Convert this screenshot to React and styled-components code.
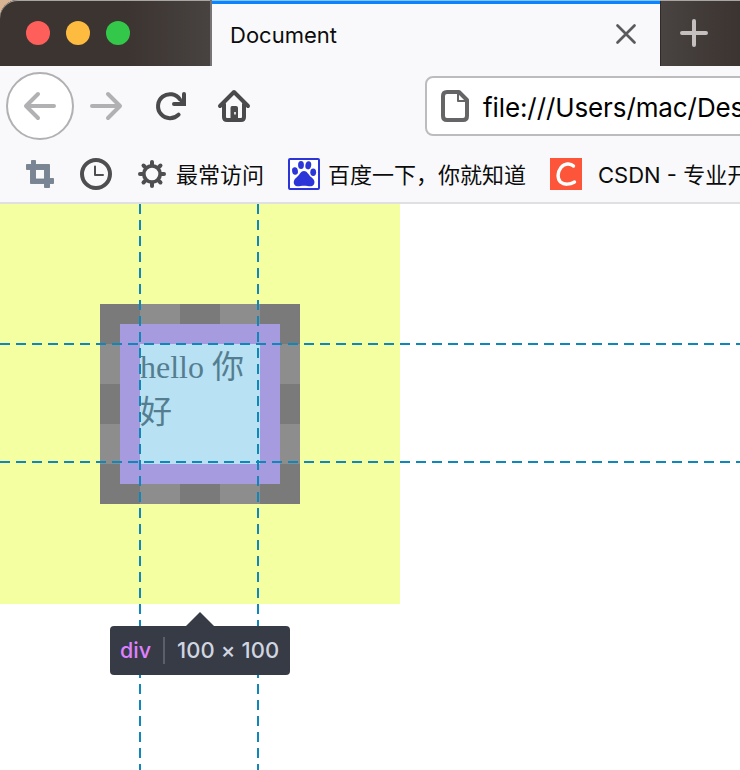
import React from "react";
import styled, { createGlobalStyle } from "styled-components";

const GlobalStyle = createGlobalStyle`
  * { box-sizing: border-box; }
  html, body { margin: 0; padding: 0; overflow: hidden; background: #fff; }
  svg { display: block; flex: none; overflow: visible; }
`;

const Window = styled.div`
  width: 740px;
  height: 770px;
  display: flex;
  flex-direction: column;
  overflow: hidden;
  background: #d8b493;
  font-family: Inter, "Noto Sans CJK SC", sans-serif;
  color: #0c0c0d;
  white-space: nowrap;
`;

const TabStrip = styled.header`
  height: 66px;
  flex: none;
  display: flex;
  border-top-left-radius: 18px;
  background: #3b3431;
  box-shadow: inset 0 1px 0 #a8a5a3;
`;

const WindowControls = styled.div`
  width: 210px;
  display: flex;
  gap: 16px;
  padding: 21px 0 0 26px;
  border-top-left-radius: 18px;
  background: linear-gradient(90deg, #3b3431 60%, #484240);
  box-shadow: inset 0 1px 0 #a8a5a3;
`;

const ControlDot = styled.span`
  width: 24px;
  height: 24px;
  border-radius: 50%;
  background: ${(p) => p.$color};
`;

const Tab = styled.div`
  width: 450px;
  display: flex;
  align-items: center;
  justify-content: space-between;
  padding: 4px 24px 0 18px;
  border-left: 2px solid #777476;
  background: linear-gradient(#8dc4fb 0 1px, #0a84ff 1px 4px, #f9f9fb 4px);
`;

const TabTitle = styled.span`
  font-size: 22px;
  line-height: 30px;
`;

const NewTab = styled.div`
  width: 80px;
  padding: 19px 0 0 20px;
  background: linear-gradient(90deg, #494341, #3b3431);
  box-shadow: inset 0 1px 0 #a8a5a3, inset 1px 0 0 #302b29;
`;

const NavBar = styled.nav`
  height: 80px;
  flex: none;
  display: flex;
  align-items: center;
  padding-left: 6px;
  background: #f9f9fb;
`;

const BackButton = styled.div`
  width: 68px;
  height: 68px;
  flex: none;
  display: grid;
  place-items: center;
  border: 2px solid #b1b1b3;
  border-radius: 50%;
  background: #fff;
`;

const NavIcon = styled.div`
  width: 32px;
  flex: none;
  margin-left: ${(p) => p.$gap}px;
`;

const UrlField = styled.div`
  width: 360px;
  height: 60px;
  flex: none;
  display: flex;
  align-items: center;
  margin-left: 175px;
  padding-left: 14px;
  gap: 14px;
  border: 2px solid #bcbcbe;
  border-radius: 8px;
  background: #fff;
`;

const UrlText = styled.span`
  font-size: 26px;
  letter-spacing: -0.1px;
  padding-top: 2px;
  color: #000;
`;

const BookmarksBar = styled.div`
  height: 58px;
  flex: none;
  display: flex;
  align-items: center;
  padding: 0 0 0 24px;
  border-bottom: 2px solid #e0e0e2;
  background: #f9f9fb;
`;

const Bookmark = styled.div`
  display: flex;
  align-items: center;
  flex: none;
  gap: ${(p) => p.$gap || 8}px;
  margin-left: ${(p) => p.$offset || 0}px;
`;

const BookmarkLabel = styled.span`
  font-size: 22px;
  line-height: 30px;
  padding-top: 2px;
`;

const Page = styled.main`
  position: relative;
  flex: 1;
  background: #fff;
`;

const MarginBox = styled.div`
  width: 400px;
  height: 400px;
  padding: 100px;
  background: #f3ffa0;
`;

const BorderBox = styled.div`
  width: 200px;
  height: 200px;
  padding: 20px;
  background:
    repeating-linear-gradient(90deg, #7a7a7a 0 40px, #8d8d8d 40px 80px) top / 100% 20px no-repeat,
    repeating-linear-gradient(90deg, #7a7a7a 0 40px, #8d8d8d 40px 80px) bottom / 100% 20px no-repeat,
    repeating-linear-gradient(#7a7a7a 0 40px, #8d8d8d 40px 80px);
`;

const PaddingBox = styled.div`
  width: 160px;
  height: 160px;
  padding: 20px;
  background: #a79be0;
`;

const ContentBox = styled.div`
  width: 120px;
  height: 120px;
  overflow: hidden;
  background: #b8e1f3;
  color: #547e90;
  font: 32px/45px "Liberation Serif", "Noto Sans CJK SC", serif;
  padding-top: 1px;
  white-space: normal;
`;

const VerticalGuide = styled.i`
  position: absolute;
  top: 0;
  bottom: 0;
  left: ${(p) => p.$at}px;
  width: 2px;
  background: repeating-linear-gradient(#0f87b8 0 10px, transparent 10px 16px);
`;

const HorizontalGuide = styled.i`
  position: absolute;
  left: 0;
  right: 0;
  top: ${(p) => p.$at}px;
  height: 2px;
  background: repeating-linear-gradient(90deg, #0f87b8 0 10px, transparent 10px 16px);
`;

const InfoTip = styled.div`
  position: absolute;
  left: 110px;
  top: 408px;
  width: 180px;
  display: flex;
  flex-direction: column;
  align-items: center;
`;

const InfoBody = styled.div`
  width: 180px;
  height: 49px;
  display: flex;
  align-items: center;
  padding-left: 10px;
  border-radius: 4px;
  background: #363b45;
  font-size: 22px;
  font-weight: 500;
  line-height: 27px;
`;

const TagName = styled.span`
  width: 34px;
  font-size: 21.5px;
  color: #df80ff;
`;

const Dimensions = styled.span`
  margin-left: 9px;
  padding-left: 12px;
  border-left: 2px solid #5a606b;
  letter-spacing: 0.1px;
  color: #d0d5e0;
`;

const Arrow = ({ flip }) => (
  <svg width="32" height="32" viewBox="0 0 32 32" fill="none" stroke="#b1b1b3" strokeWidth="4" strokeLinecap="round" strokeLinejoin="round">
    <path d={flip ? "M2 16H29M18 4L30 16L18 28" : "M30 16H3M14 4L2 16L14 28"} />
  </svg>
);

const ReloadIcon = () => (
  <svg width="32" height="32" viewBox="0 0 32 32" fill="none" stroke="#4a4a4c" strokeWidth="4" strokeLinecap="round">
    <path d="M24.6 24.6A12 12 0 1 1 26 9.5" />
    <path d="M30 4V14H20" strokeLinejoin="miter" />
    <path d="M24 14L30 8V14Z" fill="#4a4a4c" strokeWidth="1" />
  </svg>
);

const HomeIcon = () => (
  <svg width="32" height="32" viewBox="0 0 32 32" fill="none" stroke="#4a4a4c" strokeWidth="4" strokeLinecap="round" strokeLinejoin="round">
    <path d="M2 16L16 2L30 16M6 14V27Q6 30 9 30H23Q26 30 26 27V14" />
    <path d="M12.5 30V18Q12.5 16 14 16H18Q20 16 20 18V30Z" fill="#4a4a4c" stroke="none" />
    <rect x="16" y="22" width="2" height="2.5" fill="#d9d9db" stroke="none" />
  </svg>
);

const CloseIcon = () => (
  <svg width="20" height="20" viewBox="0 0 20 20" stroke="#5a5a5c" strokeWidth="2.7" strokeLinecap="round">
    <path d="M1.5 0.5L18.5 17.5M18.5 0.5L1.5 17.5" />
  </svg>
);

const PlusIcon = () => (
  <svg width="28" height="28" viewBox="0 0 28 28" stroke="#c3c0bf" strokeWidth="4" strokeLinecap="round">
    <path d="M14 2V26M2 14H26" />
  </svg>
);

const FileIcon = () => (
  <svg width="28" height="32" viewBox="0 0 28 32" fill="none" stroke="#656567" strokeWidth="4" strokeLinejoin="round">
    <path d="M6 2H18L26 10V26Q26 30 22 30H6Q2 30 2 26V6Q2 2 6 2Z" />
    <path d="M17 3V11H25" strokeWidth="2" />
  </svg>
);

const CropIcon = () => (
  <svg width="32" height="32" viewBox="0 0 32 32">
    <path fillRule="evenodd" d="M7.5 2.5H11.5V6.5H25.5V20.5H29.5V25.5H25.5V29.5H20.5V25.5H6.5V11.5H2.5V6.5H7.5ZM11.5 11.5V21H20.5V11.5Z" fill="#798594" stroke="#6c7886" strokeWidth="0.8" />
  </svg>
);

const ClockIcon = () => (
  <svg width="32" height="32" viewBox="0 0 32 32" fill="none" stroke="#4e4e50">
    <circle cx="16" cy="16" r="14" strokeWidth="4" />
    <path d="M15 8.5V17H23" strokeWidth="2" strokeLinecap="round" strokeLinejoin="round" />
  </svg>
);

const GearIcon = () => (
  <svg width="28" height="28" viewBox="0 0 28 28" fill="none" stroke="#4e4e50" strokeLinecap="round">
    <circle cx="14" cy="14" r="8.2" strokeWidth="3.7" />
    {[0, 45, 90, 135, 180, 225, 270, 315].map((angle) => (
      <path key={angle} d="M14 5V2" strokeWidth="4" transform={`rotate(${angle} 14 14)`} />
    ))}
  </svg>
);

const PawIcon = () => (
  <svg width="32" height="32" viewBox="0 0 32 32" fill="#2b35d8">
    <rect x="1" y="1" width="30" height="30" rx="1" fill="#fff" stroke="#2b35d8" strokeWidth="2" />
    <ellipse cx="7" cy="13" rx="2.9" ry="3.8" transform="rotate(-10 7 13)" />
    <ellipse cx="13" cy="7" rx="2.9" ry="4.1" />
    <ellipse cx="20.3" cy="7.3" rx="2.9" ry="4.1" transform="rotate(10 20.3 7.3)" />
    <ellipse cx="25.2" cy="14.3" rx="2.9" ry="3.7" />
    <path d="M16 13C19 13 20 16 23 19C26 21 27.5 24 25.7 26.7C23.5 29.5 20 27.7 16 27.7C12 27.7 9 29.5 6.7 27C4.7 24.4 6 21.3 9 19C12 16.6 12.6 13 16 13Z" />
  </svg>
);

const CsdnIcon = () => (
  <svg width="32" height="32" viewBox="0 0 32 32">
    <rect width="32" height="32" fill="#fc5539" />
    <path d="M23.5 8C20.5 5 14.5 5.2 11 9.5C7.5 14 7 20.7 10.5 24C14 27 20 26.8 24.5 24" fill="none" stroke="#fff" strokeWidth="3.4" strokeLinecap="round" />
  </svg>
);

const TipArrow = () => (
  <svg width="28" height="14" viewBox="0 0 28 14"><path d="M0 14L14 0L28 14Z" fill="#363b45" /></svg>
);

export default function App() {
  return (
    <Window>
      <GlobalStyle />
      <TabStrip>
        <WindowControls>
          <ControlDot $color="#ff5f5b" />
          <ControlDot $color="#fdbc40" />
          <ControlDot $color="#34c84a" />
        </WindowControls>
        <Tab>
          <TabTitle>Document</TabTitle>
          <CloseIcon />
        </Tab>
        <NewTab><PlusIcon /></NewTab>
      </TabStrip>
      <NavBar>
        <BackButton><Arrow /></BackButton>
        <NavIcon $gap={16}><Arrow flip /></NavIcon>
        <NavIcon $gap={32}><ReloadIcon /></NavIcon>
        <NavIcon $gap={32}><HomeIcon /></NavIcon>
        <UrlField>
          <FileIcon />
          <UrlText>file:///Users/mac/Des</UrlText>
        </UrlField>
      </NavBar>
      <BookmarksBar>
        <Bookmark><CropIcon /></Bookmark>
        <Bookmark $offset={24}><ClockIcon /></Bookmark>
        <Bookmark $offset={26} $gap={10}><GearIcon /><BookmarkLabel>最常访问</BookmarkLabel></Bookmark>
        <Bookmark $offset={24}><PawIcon /><BookmarkLabel>百度一下，你就知道</BookmarkLabel></Bookmark>
        <Bookmark $offset={24} $gap={16}><CsdnIcon /><BookmarkLabel>CSDN - 专业开</BookmarkLabel></Bookmark>
      </BookmarksBar>
      <Page>
        <MarginBox>
          <BorderBox>
            <PaddingBox>
              <ContentBox>hello 你好</ContentBox>
            </PaddingBox>
          </BorderBox>
        </MarginBox>
        <VerticalGuide $at={139} />
        <VerticalGuide $at={257} />
        <HorizontalGuide $at={139} />
        <HorizontalGuide $at={257} />
        <InfoTip>
          <TipArrow />
          <InfoBody>
            <TagName>div</TagName>
            <Dimensions>100 × 100</Dimensions>
          </InfoBody>
        </InfoTip>
      </Page>
    </Window>
  );
}
